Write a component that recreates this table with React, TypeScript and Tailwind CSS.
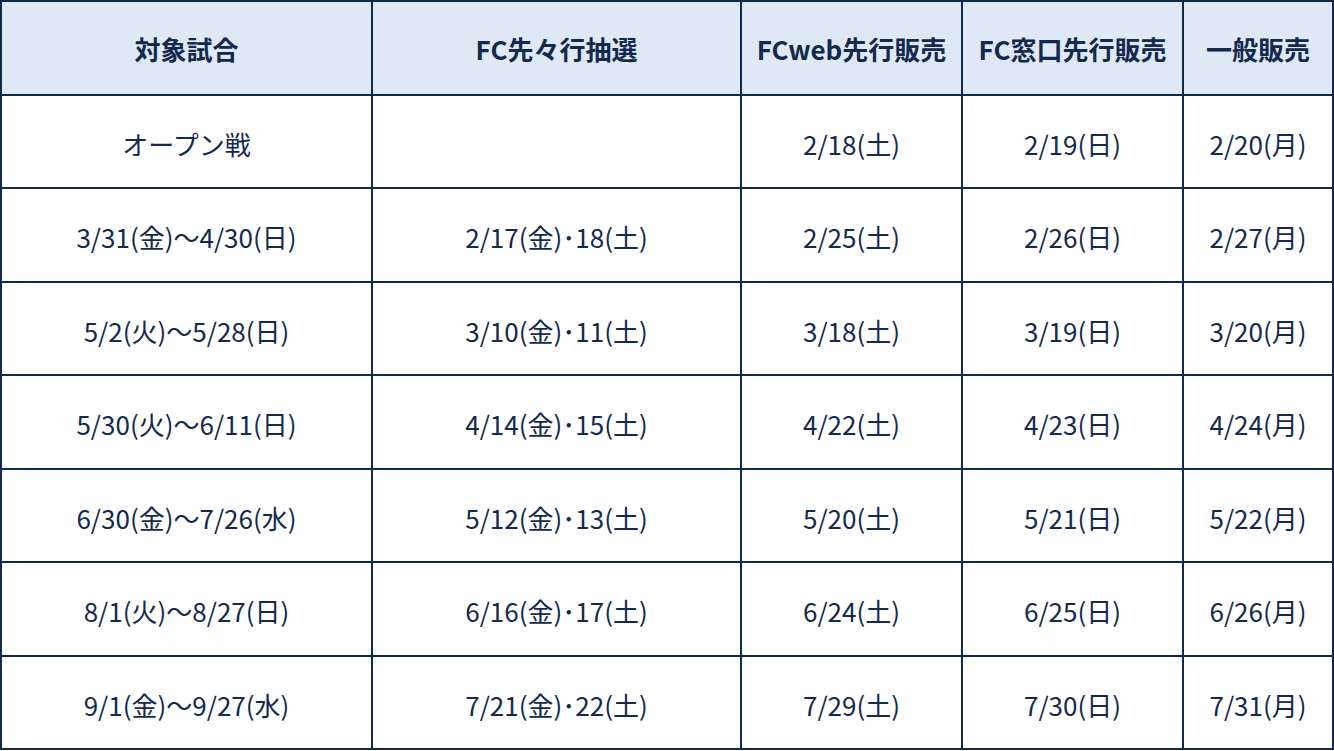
import React from "react";

const headers = ["対象試合", "FC先々行抽選", "FCweb先行販売", "FC窓口先行販売", "一般販売"];

const rows: string[][] = [
  ["オープン戦", "", "2/18(土)", "2/19(日)", "2/20(月)"],
  ["3/31(金)〜4/30(日)", "2/17(金)･18(土)", "2/25(土)", "2/26(日)", "2/27(月)"],
  ["5/2(火)〜5/28(日)", "3/10(金)･11(土)", "3/18(土)", "3/19(日)", "3/20(月)"],
  ["5/30(火)〜6/11(日)", "4/14(金)･15(土)", "4/22(土)", "4/23(日)", "4/24(月)"],
  ["6/30(金)〜7/26(水)", "5/12(金)･13(土)", "5/20(土)", "5/21(日)", "5/22(月)"],
  ["8/1(火)〜8/27(日)", "6/16(金)･17(土)", "6/24(土)", "6/25(日)", "6/26(月)"],
  ["9/1(金)〜9/27(水)", "7/21(金)･22(土)", "7/29(土)", "7/30(日)", "7/31(月)"],
];

export default function App() {
  return (
    <div
      className="w-[1334px] h-[751px] bg-white"
      style={{ fontFamily: '"Noto Sans CJK JP", "Noto Sans", sans-serif' }}
    >
      <div className="grid grid-cols-[369px_367px_219px_219px_148px] grid-rows-8 gap-[2px] p-[2px] bg-[#0f2a4f] w-[1334px] h-[750px] text-[#13294d] text-[26px] leading-none">
        {headers.map((h) => (
          <div
            key={h}
            className="bg-[#dfe9f5] flex items-center justify-center font-bold pt-[2px]"
          >
            {h}
          </div>
        ))}
        {rows.map((r, i) =>
          r.map((c, j) => (
            <div
              key={`${i}-${j}`}
              className="bg-white flex items-center justify-center pt-[5px]"
            >
              {c}
            </div>
          ))
        )}
      </div>
    </div>
  );
}
